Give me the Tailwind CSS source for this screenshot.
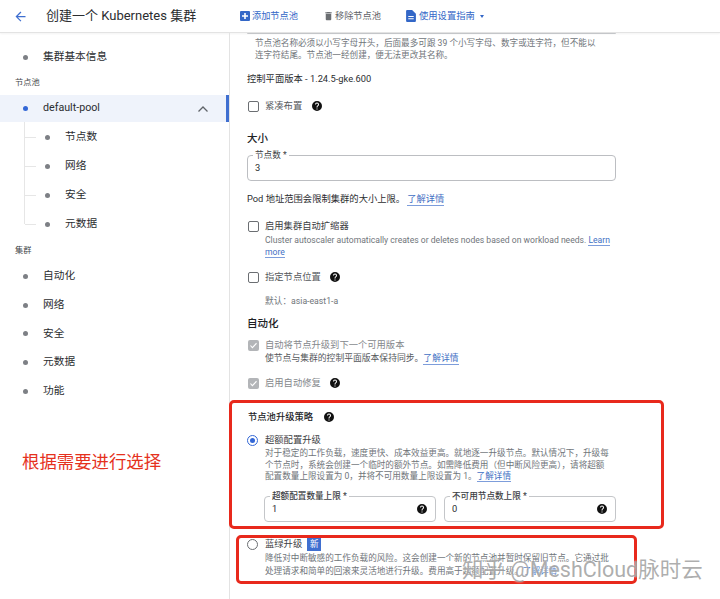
<!DOCTYPE html>
<html lang="zh-CN">
    <head>
        <title>创建一个 Kubernetes 集群</title>
        <meta charset="utf-8">
        <script src="https://cdn.jsdelivr.net/npm/@tailwindcss/browser@4"></script>
    </head>
    <body class="relative w-[720px] h-[599px] overflow-hidden bg-white text-[#2b2d30] font-['Roboto','Noto_Sans_CJK_SC',sans-serif]">
        <!-- top bar -->
        <header class="h-[33px] flex items-center border-b border-[#e3e3e3] shadow-[0_1px_2px_rgba(0,0,0,0.05)]">
            <svg class="ml-[13px] w-[15px] h-[15px] fill-[#3f6fd0]" viewBox="0 0 24 24"><path d="M20 11H7.800l5.600-5.600L12 4l-8 8 8 8 1.400-1.400L7.800 13H20z"/></svg>
            <div class="ml-[18px] w-[194px] text-[13px] whitespace-nowrap">创建一个 Kubernetes 集群</div>
            <svg class="w-[10px] h-[10px] fill-[#3367c7]" viewBox="0 0 10 10"><path fill-rule="evenodd" d="M1 0h8a1 1 0 0 1 1 1v8a1 1 0 0 1-1 1H1a1 1 0 0 1-1-1V1a1 1 0 0 1 1-1zm3.200 2v2.200H2v1.600h2.200V8h1.600V5.800H8V4.200H5.800V2z"/></svg>
            <div class="ml-[2px] w-[71px] text-[9.200px] text-[#3367c7] whitespace-nowrap">添加节点池</div>
            <svg class="w-[11px] h-[12px] fill-[#6b6e72]" viewBox="0 0 24 24"><path d="M6 19a2 2 0 0 0 2 2h8a2 2 0 0 0 2-2V7H6zM19 4h-3.500l-1-1h-5l-1 1H5v2h14z"/></svg>
            <div class="ml-[1px] w-[71px] text-[9.200px] text-[#5f6368] whitespace-nowrap">移除节点池</div>
            <svg class="w-[10px] h-[12px] fill-[#3367c7]" viewBox="0 0 18 22"><path fill-rule="evenodd" d="M2 0h9l7 7v13a2 2 0 0 1-2 2H2a2 2 0 0 1-2-2V2a2 2 0 0 1 2-2zm2 11v2h10v-2zm0 4v2h10v-2z"/></svg>
            <div class="ml-[3px] text-[9.300px] text-[#3367c7] whitespace-nowrap">使用设置指南</div>
            <div class="ml-[5px] w-0 h-0 border-x-[2.500px] border-x-transparent border-t-[3px] border-t-[#3367c7]"></div>
        </header>

        <div class="flex h-[566px]">
            <!-- left nav -->
            <nav class="w-[230px] shrink-0 border-r border-[#e3e3e3] text-[10.700px] pt-[10px]">
                <div class="h-[28px] flex items-center pl-[23px] gap-[15px]"><span class="w-[5px] h-[5px] rounded-full bg-[#7d8085]"></span>集群基本信息</div>
                <div class="h-[23px] flex items-center pl-[15px] text-[8.200px] text-[#45484c] mb-[1px]">节点池</div>
                <div class="relative h-[27px] flex items-center pl-[23px] gap-[15px] bg-[#eff3fb]">
                    <span class="w-[5px] h-[5px] rounded-full bg-[#3367d6]"></span>default-pool
                    <svg class="absolute left-[197px] top-[8px] w-[12px] h-[12px] fill-none stroke-[#5f6368] stroke-[2.500]" viewBox="0 0 24 24"><path d="M3 17l9-9 9 9"/></svg>
                    <span class="absolute right-0 top-0 w-[3px] h-[27px] bg-[#3f6fd0]"></span>
                </div>
                <div class="relative border-l border-[#e6e6e6] ml-[24px] h-[102px] pt-[1px]">
                    <div class="h-[29px] flex items-center gap-[15px]"><span class="w-[11px] h-px bg-[#e6e6e6] -mr-[6px]"></span><span class="w-[5px] h-[5px] rounded-full bg-[#7d8085]"></span>节点数</div>
                    <div class="h-[28.500px] flex items-center gap-[15px]"><span class="w-[11px] h-px bg-[#e6e6e6] -mr-[6px]"></span><span class="w-[5px] h-[5px] rounded-full bg-[#7d8085]"></span>网络</div>
                    <div class="h-[29px] flex items-center gap-[15px]"><span class="w-[11px] h-px bg-[#e6e6e6] -mr-[6px]"></span><span class="w-[5px] h-[5px] rounded-full bg-[#7d8085]"></span>安全</div>
                    <div class="h-[29px] flex items-center gap-[15px]"><span class="w-[11px] h-px bg-[#e6e6e6] -mr-[6px]"></span><span class="w-[5px] h-[5px] rounded-full bg-[#7d8085]"></span>元数据</div>
                </div>
                <div class="h-[24px] mt-[14px] flex items-center pl-[15px] text-[8.200px] text-[#45484c]">集群</div>
                <div class="h-[28.700px] flex items-center pl-[23px] gap-[15px]"><span class="w-[5px] h-[5px] rounded-full bg-[#7d8085]"></span>自动化</div>
                <div class="h-[28.700px] flex items-center pl-[23px] gap-[15px]"><span class="w-[5px] h-[5px] rounded-full bg-[#7d8085]"></span>网络</div>
                <div class="h-[28.700px] flex items-center pl-[23px] gap-[15px]"><span class="w-[5px] h-[5px] rounded-full bg-[#7d8085]"></span>安全</div>
                <div class="h-[28.700px] flex items-center pl-[23px] gap-[15px]"><span class="w-[5px] h-[5px] rounded-full bg-[#7d8085]"></span>元数据</div>
                <div class="h-[28.700px] flex items-center pl-[23px] gap-[15px]"><span class="w-[5px] h-[5px] rounded-full bg-[#7d8085]"></span>功能</div>
            </nav>

            <!-- form column -->
            <main class="w-[369px] ml-[17px] text-[9.300px]">
                <div class="h-[1px] border-b border-[#c4c6c9] rounded-b"></div>
                <p class="ml-[8px] mt-[3px] w-[355px] text-[8.600px] leading-[12px] text-[#70757a]">节点池名称必须以小写字母开头&#xFF0C;后面最多可跟 39 个小写字母、数字或连字符&#xFF0C;但不能以<br>连字符结尾。节点池一经创建&#xFF0C;便无法更改其名称。</p>
                <div class="h-[16px] mt-[10px] flex items-center">控制平面版本 - 1.24.5-gke.600</div>
                <div class="h-[16px] mt-[11px] flex items-center">
                    <span class="ml-[1px] w-[11px] h-[11px] border-[1.500px] border-[#6b6e72] rounded-[2px]"></span>
                    <span class="ml-[6px] w-[38px] text-[#55585c] whitespace-nowrap">紧凑布置</span>
                    <svg class="ml-[8px] w-[12px] h-[12px]" viewBox="0 0 24 24"><path fill="#111" d="M12 2a10 10 0 1 0 0 20 10 10 0 0 0 0-20zm1 17h-2v-2h2zm2.100-7.700l-.9.900c-.7.700-1.200 1.300-1.200 2.800h-2v-.5c0-1.100.5-2.100 1.200-2.800l1.200-1.300c.4-.3.600-.8.600-1.400a2 2 0 0 0-4 0H8a4 4 0 0 1 8 0c0 .9-.4 1.700-.9 2.300z"/></svg>
                </div>
                <div class="h-[18px] mt-[16px] flex items-center text-[10.500px] font-medium text-[#202124]">大小</div>
                <div class="relative h-[26px] mt-[7px] border border-[#bcbec2] rounded-[4px] flex items-center pl-[7px]">3
                    <span class="absolute left-[5px] -top-[7px] px-[2px] bg-white text-[8.600px] leading-[12px] text-[#3c4043]">节点数 *</span>
                </div>
                <div class="h-[16px] mt-[10px] flex items-center whitespace-nowrap">Pod 地址范围会限制集群的大小上限。<a class="ml-[2px] text-[#3f6fc4] border-b border-[#7d9ddb] leading-[12px]">了解详情</a></div>
                <div class="h-[16px] mt-[11px] flex items-center">
                    <span class="ml-[1px] w-[11px] h-[11px] border-[1.500px] border-[#6b6e72] rounded-[2px]"></span>
                    <span class="ml-[6px] text-[#3c4043]">启用集群自动扩缩器</span>
                </div>
                <p class="ml-[18px] mt-[1px] w-[351px] text-[8.600px] leading-[11.500px] text-[#70757a]">Cluster autoscaler automatically creates or deletes nodes based on workload needs. <a class="text-[#3f6fc4] border-b border-[#7d9ddb]">Learn<br>more</a></p>
                <div class="h-[16px] mt-[11px] flex items-center">
                    <span class="ml-[1px] w-[11px] h-[11px] border-[1.500px] border-[#6b6e72] rounded-[2px]"></span>
                    <span class="ml-[6px] w-[56px] text-[#55585c] whitespace-nowrap">指定节点位置</span>
                    <svg class="ml-[8px] w-[12px] h-[12px]" viewBox="0 0 24 24"><path fill="#111" d="M12 2a10 10 0 1 0 0 20 10 10 0 0 0 0-20zm1 17h-2v-2h2zm2.100-7.700l-.9.900c-.7.700-1.200 1.300-1.200 2.800h-2v-.5c0-1.100.5-2.100 1.200-2.800l1.200-1.300c.4-.3.600-.8.600-1.400a2 2 0 0 0-4 0H8a4 4 0 0 1 8 0c0 .9-.4 1.700-.9 2.300z"/></svg>
                </div>
                <div class="ml-[18px] h-[12px] mt-[11px] flex items-center text-[8.700px] text-[#70757a]">默认&#xFF1A;asia-east1-a</div>
                <div class="h-[18px] mt-[7px] flex items-center text-[10.500px] font-medium text-[#202124]">自动化</div>
                <div class="h-[14px] mt-[5px] flex items-center">
                    <span class="ml-[1px] w-[11px] h-[11px] rounded-[2px] bg-[#b3b5b8] flex items-center justify-center"><svg class="w-[9px] h-[9px] fill-none stroke-white stroke-[3]" viewBox="0 0 24 24"><path d="M4 12l5 6L20 6"/></svg></span>
                    <span class="ml-[6px] text-[#85888c]">自动将节点升级到下一个可用版本</span>
                </div>
                <div class="ml-[18px] h-[13px] flex items-center text-[8.800px] text-[#55585c] whitespace-nowrap">使节点与集群的控制平面版本保持同步。<a class="text-[#3f6fc4] border-b border-[#7d9ddb] leading-[12px]">了解详情</a></div>
                <div class="h-[16px] mt-[10px] flex items-center">
                    <span class="ml-[1px] w-[11px] h-[11px] rounded-[2px] bg-[#b3b5b8] flex items-center justify-center"><svg class="w-[9px] h-[9px] fill-none stroke-white stroke-[3]" viewBox="0 0 24 24"><path d="M4 12l5 6L20 6"/></svg></span>
                    <span class="ml-[6px] w-[56px] text-[#85888c] whitespace-nowrap">启用自动修复</span>
                    <svg class="ml-[8px] w-[12px] h-[12px]" viewBox="0 0 24 24"><path fill="#111" d="M12 2a10 10 0 1 0 0 20 10 10 0 0 0 0-20zm1 17h-2v-2h2zm2.100-7.700l-.9.900c-.7.700-1.200 1.300-1.200 2.800h-2v-.5c0-1.100.5-2.100 1.200-2.800l1.200-1.300c.4-.3.600-.8.600-1.400a2 2 0 0 0-4 0H8a4 4 0 0 1 8 0c0 .9-.4 1.700-.9 2.300z"/></svg>
                </div>
                <div class="h-[16px] mt-[18px] flex items-center">
                    <span class="ml-[1px] w-[65px] font-medium text-[#202124] whitespace-nowrap">节点池升级策略</span>
                    <svg class="ml-[10px] w-[12px] h-[12px]" viewBox="0 0 24 24"><path fill="#111" d="M12 2a10 10 0 1 0 0 20 10 10 0 0 0 0-20zm1 17h-2v-2h2zm2.100-7.700l-.9.900c-.7.700-1.200 1.300-1.200 2.800h-2v-.5c0-1.100.5-2.100 1.200-2.800l1.200-1.300c.4-.3.600-.8.600-1.400a2 2 0 0 0-4 0H8a4 4 0 0 1 8 0c0 .9-.4 1.700-.9 2.300z"/></svg>
                </div>
                <div class="h-[14px] mt-[8px] flex items-center">
                    <span class="w-[11px] h-[11px] rounded-full border-[1.500px] border-[#3367d6] flex items-center justify-center"><span class="w-[5px] h-[5px] rounded-full bg-[#3367d6]"></span></span>
                    <span class="ml-[7px] text-[#3c4043]">超额配置升级</span>
                </div>
                <p class="ml-[18px] mt-[1px] w-[351px] text-[8.600px] leading-[11.700px] text-[#70757a] whitespace-nowrap">对于稳定的工作负载&#xFF0C;速度更快、成本效益更高。就地逐一升级节点。默认情况下&#xFF0C;升级每<br>个节点时&#xFF0C;系统会创建一个临时的额外节点。如需降低费用&#xFF08;但中断风险更高&#xFF09;&#xFF0C;请将超额<br>配置数量上限设置为 0&#xFF0C;并将不可用数量上限设置为 1。<a class="text-[#3f6fc4] border-b border-[#7d9ddb]">了解详情</a></p>
                <div class="ml-[17px] mt-[13px] flex gap-[8px]">
                    <div class="relative w-[172px] h-[26px] border border-[#c4c6c9] rounded-[4px] flex items-center justify-between px-[7px]">1
                        <svg class="w-[12px] h-[12px]" viewBox="0 0 24 24"><path fill="#111" d="M12 2a10 10 0 1 0 0 20 10 10 0 0 0 0-20zm1 17h-2v-2h2zm2.100-7.700l-.9.900c-.7.700-1.200 1.300-1.200 2.800h-2v-.5c0-1.100.5-2.100 1.200-2.800l1.200-1.300c.4-.3.600-.8.600-1.400a2 2 0 0 0-4 0H8a4 4 0 0 1 8 0c0 .9-.4 1.700-.9 2.300z"/></svg>
                        <span class="absolute left-[5px] -top-[7px] px-[2px] bg-white font-medium text-[8.600px] leading-[12px] text-[#3c4043]">超额配置数量上限 *</span>
                    </div>
                    <div class="relative w-[172px] h-[26px] border border-[#c4c6c9] rounded-[4px] flex items-center justify-between px-[7px]">0
                        <svg class="w-[12px] h-[12px]" viewBox="0 0 24 24"><path fill="#111" d="M12 2a10 10 0 1 0 0 20 10 10 0 0 0 0-20zm1 17h-2v-2h2zm2.100-7.700l-.9.900c-.7.700-1.200 1.300-1.200 2.800h-2v-.5c0-1.100.5-2.100 1.200-2.800l1.200-1.300c.4-.3.600-.8.600-1.400a2 2 0 0 0-4 0H8a4 4 0 0 1 8 0c0 .9-.4 1.700-.9 2.300z"/></svg>
                        <span class="absolute left-[5px] -top-[7px] px-[2px] bg-white font-medium text-[8.600px] leading-[12px] text-[#3c4043]">不可用节点数上限 *</span>
                    </div>
                </div>
                <div class="h-[14px] mt-[15px] flex items-center">
                    <span class="w-[11px] h-[11px] rounded-full border-[1.500px] border-[#6b6e72]"></span>
                    <span class="ml-[7px] text-[#3c4043]">蓝绿升级</span>
                    <span class="ml-[5px] w-[14px] h-[13px] leading-[13px] text-center bg-[#3f6fd0] text-white text-[8.600px]">新</span>
                </div>
                <p class="ml-[18px] mt-[1px] w-[351px] text-[8.600px] leading-[12.500px] text-[#70757a] whitespace-nowrap">降低对中断敏感的工作负载的风险。这会创建一个新的节点池并暂时保留旧节点。它通过批<br>处理请求和简单的回滚来灵活地进行升级。费用高于超额配置升级。<a class="text-[#3f6fc4]">了解详情</a></p>
            </main>
        </div>

        <!-- annotations drawn over the screenshot -->
        <div class="absolute left-[229px] top-[400px] w-[435px] h-[129px] border-[3px] border-[#e8291c] rounded-[5px]"></div>
        <div class="absolute left-[236px] top-[535px] w-[401px] h-[49px] border-[3px] border-[#e8291c] rounded-[5px]"></div>
        <div class="absolute left-[22px] top-[450px] text-[17.400px] leading-[24px] text-[#e5311d] whitespace-nowrap">根据需要进行选择</div>
        <div class="absolute left-[462px] top-[555px] text-[21.500px] leading-[30px] text-[#8a8a8a]/70 whitespace-nowrap [text-shadow:0_0_2px_white]">知乎 @MeshCloud脉时云</div>
    </body>
</html>
